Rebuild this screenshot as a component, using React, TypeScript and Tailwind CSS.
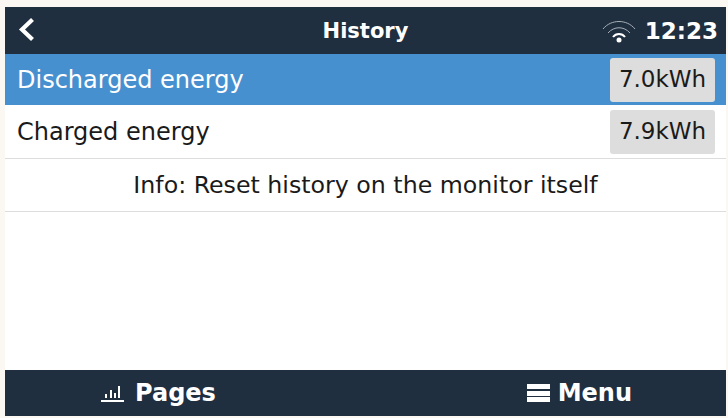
export default function App() {
  return (
    <div className="w-[728px] h-[418px] bg-[#fbf8f4] pt-[7px] pb-[2px] pl-[5px] pr-[2px] overflow-hidden" style={{ fontFamily: '"DejaVu Sans", sans-serif' }}>
      <div className="w-full h-full flex flex-col bg-white">
        <div className="h-[47px] shrink-0 bg-[#1f2f3f] relative flex items-center justify-center text-white">
          <svg className="absolute left-[13px] top-[10px]" width="18" height="26" viewBox="0 0 18 26" fill="none">
            <path d="M14.5 2.5 L4 12.5 L14.5 22.5" stroke="white" strokeWidth="4.2" />
          </svg>
          <span className="text-[21px] font-bold pt-[2px]">History</span>
          <div className="absolute right-[8px] top-0 h-full flex items-center gap-[9px]">
            <svg width="34" height="24" viewBox="0 0 34 24" fill="none" stroke="#a9b0b8">
              <path d="M1 10 C9 0 25 0 33 10" strokeWidth="1" />
              <path d="M6 14 C12 7 22 7 28 14" strokeWidth="1" />
              <path d="M11 18 C14 14 20 14 23 18" strokeWidth="2" stroke="white" />
              <circle cx="17" cy="21" r="2.5" fill="white" stroke="none" />
            </svg>
            <span className="text-[23px] font-bold pt-[1px]">12:23</span>
          </div>
        </div>
        <div className="h-[51px] shrink-0 bg-[#4790d0] flex items-center justify-between pl-[12px] pr-[11px] text-white">
          <span className="text-[24px]">Discharged energy</span>
          <span className="w-[105px] h-[44px] bg-[#dddddd] rounded-[3px] flex items-center justify-center text-[23px] text-[#1a1a1a]">7.0kWh</span>
        </div>
        <div className="h-[54px] shrink-0 border-b border-[#dddddd] flex items-center justify-between pl-[12px] pr-[11px] text-[#1a1a1a]">
          <span className="text-[24px]">Charged energy</span>
          <span className="w-[105px] h-[44px] bg-[#dddddd] rounded-[3px] flex items-center justify-center text-[23px]">7.9kWh</span>
        </div>
        <div className="h-[53px] shrink-0 border-b border-[#dddddd] flex items-center justify-center text-[23.7px] text-[#1a1a1a] pt-[2px]">
          Info: Reset history on the monitor itself
        </div>
        <div className="flex-1" />
        <div className="h-[46px] shrink-0 bg-[#1f2f3f] flex justify-between text-white font-bold text-[24px] pl-[96px] pr-[94px]">
          <div className="flex items-center gap-[11px]">
            <svg width="23" height="20" viewBox="0 0 23 20" fill="white">
              <rect x="0" y="17" width="23" height="2" />
              <rect x="4" y="11" width="2" height="4" />
              <rect x="9" y="7" width="2" height="8" />
              <rect x="13" y="10" width="2" height="5" />
              <rect x="17" y="3" width="2" height="12" />
            </svg>
            <span>Pages</span>
          </div>
          <div className="flex items-center gap-[8px]">
            <svg width="23" height="20" viewBox="0 0 23 20" fill="white">
              <rect x="0" y="1" width="23" height="5" />
              <rect x="0" y="8" width="23" height="5" />
              <rect x="0" y="14" width="23" height="5" />
            </svg>
            <span>Menu</span>
          </div>
        </div>
      </div>
    </div>
  );
}
